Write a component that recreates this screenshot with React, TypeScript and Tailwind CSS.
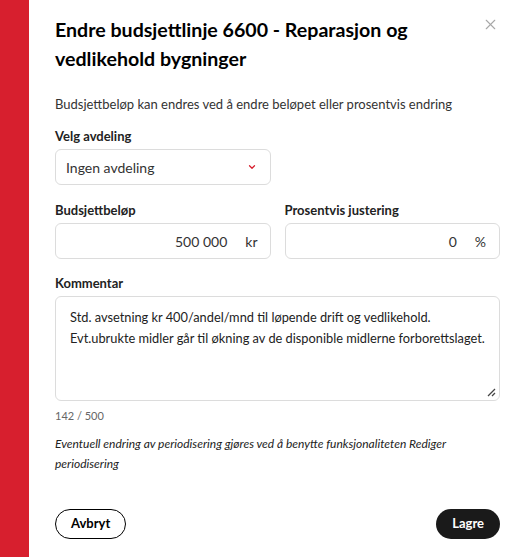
import { ChevronDown, X } from 'lucide-react';

const font = { fontFamily: 'Lato, "Noto Sans", sans-serif' };

export default function App() {
  return (
    <div className="flex min-h-[557px] w-[525px] bg-white text-[#222]" style={font}>
      {/* Red side bar */}
      <div className="w-[29px] shrink-0 bg-[#d71f2e]" />

      <div className="flex flex-1 flex-col pl-[26px] pr-[25px] pt-[15px] pb-[20px]">
        {/* Header */}
        <div className="flex items-start justify-between">
          <h1 className="max-w-[380px] text-[19.6px] font-bold leading-[29px] text-black">
            Endre budsjettlinje 6600 - Reparasjon og vedlikehold bygninger
          </h1>
          <button className="mr-[1px] mt-[1px] text-[#a8a8a8]">
            <X className="h-[17px] w-[17px]" strokeWidth={1.6} />
          </button>
        </div>

        <p className="mt-[21px] text-[13px] leading-[20px] text-[#333]">
          Budsjettbeløp kan endres ved å endre beløpet eller prosentvis endring
        </p>

        {/* Avdeling */}
        <label className="mt-[12px] text-[13px] font-bold leading-[20px] text-[#222]">Velg avdeling</label>
        <div className="mt-[3px] flex h-[36px] w-[216px] items-center justify-between rounded-[6px] border border-[#dcdcdc] pl-[10px] pr-[13px]">
          <span className="text-[14px] text-[#333]">Ingen avdeling</span>
          <ChevronDown className="h-[10px] w-[10px] text-[#d71f2e]" strokeWidth={3} />
        </div>

        {/* Beløp + prosent */}
        <div className="mt-[15px] grid grid-cols-2 gap-[14px]">
          <div className="flex flex-col">
            <label className="text-[13px] font-bold leading-[20px] text-[#222]">Budsjettbeløp</label>
            <div className="mt-[3px] flex h-[36px] items-center justify-end gap-[18px] rounded-[6px] border border-[#dcdcdc] pr-[12px]">
              <span className="text-[14px] text-[#333]">500 000</span>
              <span className="text-[14px] text-[#333]">kr</span>
            </div>
          </div>
          <div className="flex flex-col">
            <label className="text-[13px] font-bold leading-[20px] text-[#222]">Prosentvis justering</label>
            <div className="mt-[3px] flex h-[36px] items-center justify-end gap-[18px] rounded-[6px] border border-[#dcdcdc] pr-[13px]">
              <span className="text-[14px] text-[#333]">0</span>
              <span className="text-[14px] text-[#333]">%</span>
            </div>
          </div>
        </div>

        {/* Kommentar */}
        <label className="mt-[14px] text-[13px] font-bold leading-[20px] text-[#222]">Kommentar</label>
        <div className="relative mt-[3px] h-[105px] rounded-[6px] border border-[#dcdcdc] pl-[14px] pr-[6px] pt-[10px]">
          <p className="whitespace-nowrap text-[12.8px] leading-[21px] text-[#222]">
            Std. avsetning kr 400/andel/mnd til løpende drift og vedlikehold.
            <br />
            Evt.ubrukte midler går til økning av de disponible midlerne forborettslaget.
          </p>
          <svg className="absolute bottom-[3px] right-[3px]" width="9" height="9" viewBox="0 0 9 9">
            <path d="M1 8 L8 1 M5 8 L8 5" stroke="#444" strokeWidth="1.3" />
          </svg>
        </div>
        <div className="mt-[7px] text-[11px] leading-[16px] text-[#666]">142 / 500</div>

        <p className="mt-[10px] text-[12px] italic leading-[20px] text-[#222]">
          Eventuell endring av periodisering gjøres ved å benytte funksjonaliteten Rediger periodisering
        </p>

        {/* Buttons */}
        <div className="mt-[35px] flex items-center justify-between">
          <button className="h-[30px] rounded-full border border-black px-[15px] text-[13px] font-bold text-black">
            Avbryt
          </button>
          <button className="h-[30px] rounded-full bg-[#1a1a1a] px-[16px] text-[13px] font-bold text-white">
            Lagre
          </button>
        </div>
      </div>
    </div>
  );
}
